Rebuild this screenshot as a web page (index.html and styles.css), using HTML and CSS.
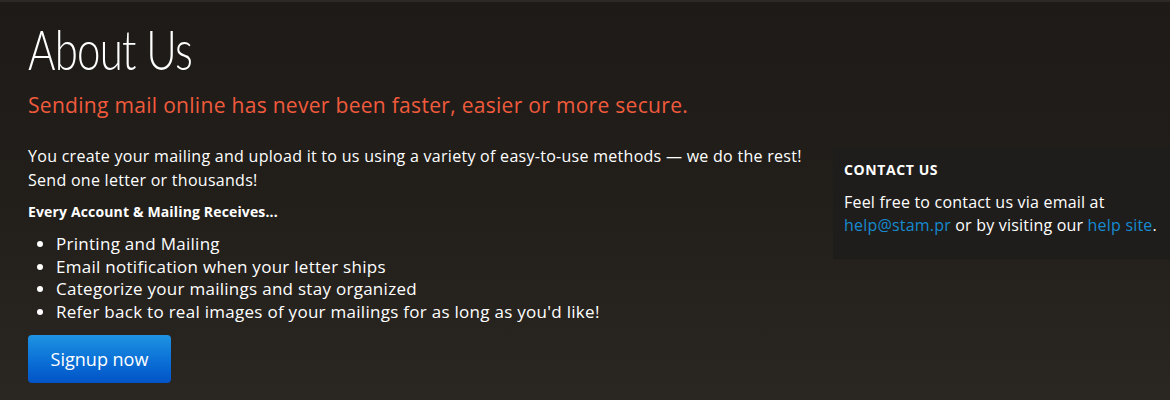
FILE: index.html
```html
<!DOCTYPE html>
<html lang="en">
<head>
  <meta charset="UTF-8">
  <meta name="viewport" content="width=device-width, initial-scale=1.0">
  <title>About Us</title>
  <link rel="stylesheet" href="styles.css">
</head>
<body>
  <div class="page">
    <div class="main">
      <h1 class="title"><span>About Us</span></h1>
      <h2 class="tagline">Sending mail online has never been faster, easier or more secure.</h2>

      <p class="intro">You create your mailing and upload it to us using a variety of easy-to-use methods &mdash; we do the rest!<br>Send one letter or thousands!</p>

      <h3 class="list-title">Every Account &amp; Mailing Receives...</h3>
      <ul class="features">
        <li>Printing and Mailing</li>
        <li>Email notification when your letter ships</li>
        <li>Categorize your mailings and stay organized</li>
        <li>Refer back to real images of your mailings for as long as you'd like!</li>
      </ul>

      <a class="btn-signup" href="#">Signup now</a>
    </div>

    <aside class="contact">
      <h4>CONTACT US</h4>
      <p>Feel free to contact us via email at<br><a href="#">help@stam.pr</a> or by visiting our <a href="#">help site</a>.</p>
    </aside>
  </div>
</body>
</html>
```

FILE: styles.css
```css
html, body {
  height: 100%;
}

body {
  margin: 0;
  font-family: "Open Sans", Arial, sans-serif;
  letter-spacing: 0.28px;
  color: #fff;
  background: linear-gradient(to bottom, #1d1a17 0%, #221f1b 50%, #2a2621 100%);
  border-top: 2px solid #2c2926;
  box-sizing: border-box;
}

.page {
  display: grid;
  grid-template-columns: 805px 1fr;
  padding-left: 28px;
}

.title {
  margin: 0;
  padding-top: 14px;
  height: 66px;
  font-family: Lato, sans-serif;
  font-weight: 300;
  font-size: 56px;
  line-height: 66px;
  letter-spacing: 0;
}

.title span {
  display: inline-block;
  transform: scaleX(0.75);
  transform-origin: left center;
  letter-spacing: -1px;
}

.tagline {
  margin: 10px 0 0;
  font-size: 21px;
  font-weight: 400;
  line-height: 26px;
  letter-spacing: 0.3px;
  color: #f05a3c;
}

.intro {
  margin: 26px 0 0;
  font-size: 16px;
  line-height: 24px;
}

.list-title {
  margin: 10px 0 0;
  font-size: 14px;
  font-weight: 700;
  line-height: 20px;
  letter-spacing: 0.15px;
}

.features {
  margin: 11px 0 0;
  padding-left: 28px;
  font-size: 17px;
  line-height: 22.7px;
}

.btn-signup {
  display: inline-block;
  margin-top: 11px;
  width: 143px;
  height: 48px;
  line-height: 48px;
  text-align: center;
  font-size: 18px;
  letter-spacing: 0;
  color: #fff;
  text-decoration: none;
  border-radius: 4px;
  background: linear-gradient(to bottom, #1f93e2 0%, #0a6fd6 55%, #0253c6 100%);
}

.contact {
  align-self: start;
  margin-top: 145px;
  padding: 14px 0 22px 11px;
  background: #1f1d1b;
}

.contact h4 {
  margin: 0;
  font-size: 14px;
  font-weight: 700;
  line-height: 18px;
  letter-spacing: 0.6px;
}

.contact p {
  margin: 12px 0 0;
  font-size: 16px;
  line-height: 23px;
  letter-spacing: 0.2px;
  white-space: nowrap;
}

.contact a {
  color: #168ad0;
  text-decoration: none;
}
```
